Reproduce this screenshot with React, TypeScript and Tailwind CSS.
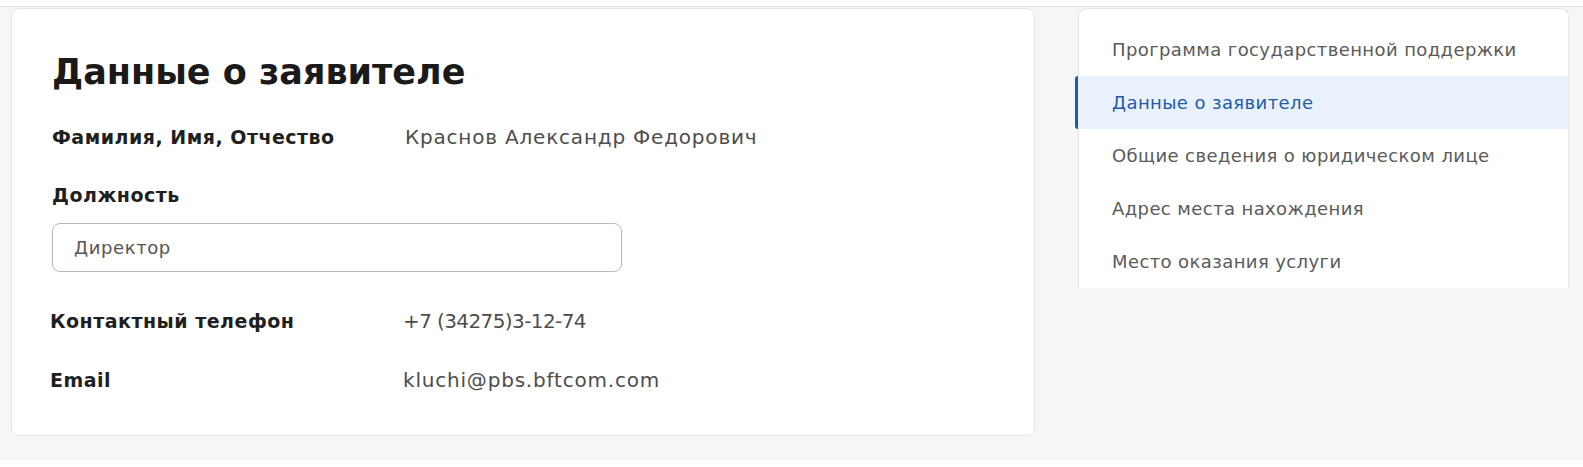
const navItems = [
  "Программа государственной поддержки",
  "Данные о заявителе",
  "Общие сведения о юридическом лице",
  "Адрес места нахождения",
  "Место оказания услуги",
];

const font = "font-['DejaVu_Sans',_'Noto_Sans',_sans-serif]";

function InfoRow({
  label,
  value,
  className,
  valueClass,
}: {
  label: string;
  value: string;
  className?: string;
  valueClass?: string;
}) {
  return (
    <div className={`flex h-[40px] items-center ${className ?? ""}`}>
      <div className="w-[353px] shrink-0 text-[19px] font-bold tracking-[0.5px] text-[#1f1f1f]">{label}</div>
      <div className={`text-[20px] text-[#4d4d4d] ${valueClass ?? "tracking-[0.8px]"}`}>{value}</div>
    </div>
  );
}

export default function App() {
  return (
    <div className={`h-[467px] w-[1583px] bg-white ${font}`}>
      <div className="mt-[6px] flex h-[454px] border-t border-[#e2e2e2] bg-[#f6f6f6] pl-[11px] pt-[1px]">
        {/* Main card */}
        <div className="h-[428px] w-[1024px] shrink-0 rounded-[8px] border border-[#e6e6e6] bg-white pl-[40px] pt-[39px]">
          <h1 className="h-[48px] text-[35px] font-bold leading-[48px] text-[#1a1a1a]">Данные о заявителе</h1>
          <InfoRow label="Фамилия, Имя, Отчество" value="Краснов Александр Федорович" className="mt-[21px]" />
          <div className="mt-[18px] flex h-[40px] items-center text-[19px] font-bold tracking-[0.5px] text-[#1f1f1f]">
            Должность
          </div>
          <div className="mt-[8px] flex h-[49px] w-[570px] items-center rounded-[8px] border border-[#b9b9b9] pl-[21px] text-[18px] tracking-[0.6px] text-[#555]">
            Директор
          </div>
          <InfoRow
            label="Контактный телефон"
            value="+7 (34275)3-12-74"
            className="mt-[29px] -ml-[2px]"
            valueClass="tracking-[-0.6px]"
          />
          <InfoRow label="Email" value="kluchi@pbs.bftcom.com" className="mt-[19px] -ml-[2px]" />
        </div>

        {/* Side navigation */}
        <div className="ml-[43px] h-[280px] w-[491px] shrink-0 rounded-t-[8px] border-x border-t border-[#e6e6e6] bg-white pt-[14px]">
          {navItems.map((item, i) =>
            i === 1 ? (
              <div
                key={item}
                className="-ml-[4px] flex h-[53px] items-center rounded-l-[3px] border-l-[3px] border-[#1d5cb0] bg-[#e9f2fc] pl-[34px] text-[18px] tracking-[0.4px] text-[#1f5ba8]"
              >
                {item}
              </div>
            ) : (
              <div key={item} className="flex h-[53px] items-center pl-[33px] text-[18px] tracking-[0.4px] text-[#5a5a5a]">
                {item}
              </div>
            )
          )}
        </div>
      </div>
    </div>
  );
}
